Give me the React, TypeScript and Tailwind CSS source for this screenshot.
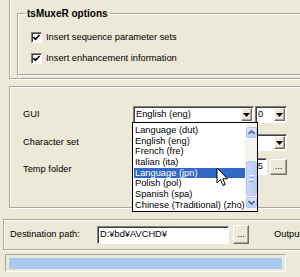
import React from "react";

const FONT = { fontFamily: '"Liberation Sans", Arial, sans-serif' };

const languages = [
  "Language (dut)",
  "English (eng)",
  "French (fre)",
  "Italian (ita)",
  "Language (jpn)",
  "Polish (pol)",
  "Spanish (spa)",
  "Chinese (Traditional) (zho)",
];

function Checkbox() {
  return (
    <div className="w-[11px] h-[11px] bg-white border border-t-[#808080] border-l-[#808080] border-r-white border-b-white shadow-[inset_1px_1px_0_#404040] flex items-center justify-center">
      <svg width="9" height="9" viewBox="0 0 9 9">
        <polyline points="1.5,4.2 3.5,6.3 7.5,2" fill="none" stroke="#000" strokeWidth="1.7" />
      </svg>
    </div>
  );
}

function ArrowButton() {
  return (
    <div className="w-[11px] h-full bg-[#ece9d8] border border-t-white border-l-white border-r-[#716f64] border-b-[#716f64] shadow-[inset_-1px_-1px_0_#aca899] flex items-center justify-center">
      <svg width="7" height="4" viewBox="0 0 7 4">
        <polygon points="0,0 7,0 3.5,4" fill="#000" />
      </svg>
    </div>
  );
}

function Sunken({ className, children }: { className: string; children?: React.ReactNode }) {
  return (
    <div
      className={`bg-white border border-t-[#808080] border-l-[#808080] border-r-white border-b-white shadow-[inset_1px_1px_0_#404040] flex items-center ${className}`}
    >
      {children}
    </div>
  );
}

function Combo({ className, text }: { className: string; text: string }) {
  return (
    <Sunken className={`${className} pl-[2px] pr-[1px] py-[1px]`}>
      <span className="flex-1 leading-none">{text}</span>
      <ArrowButton />
    </Sunken>
  );
}

function DotsButton({ className }: { className: string }) {
  return (
    <div
      className={`bg-[#ece9d8] border border-t-white border-l-white border-r-[#716f64] border-b-[#716f64] shadow-[inset_-1px_-1px_0_#aca899] flex items-center justify-center leading-none ${className}`}
    >
      ...
    </div>
  );
}

function Chevron({ up }: { up: boolean }) {
  return (
    <svg width="7" height="5" viewBox="0 0 7 5">
      <polyline
        points={up ? "0.5,4 3.5,1 6.5,4" : "0.5,1 3.5,4 6.5,1"}
        fill="none"
        stroke="#4d6185"
        strokeWidth="1.6"
      />
    </svg>
  );
}

function ScrollBtn({ up }: { up: boolean }) {
  return (
    <div className="h-[11px] w-full rounded-[2px] border border-[#b5c8f2] bg-gradient-to-b from-[#dbe5fd] to-[#bccdf7] flex items-center justify-center">
      <Chevron up={up} />
    </div>
  );
}

function DropList() {
  return (
    <div className="absolute left-[132px] top-[122px] w-[126px] h-[90px] bg-white border border-black flex">
      <div className="flex-1 pt-[2px] pl-[1px]">
        {languages.map((lang) => (
          <div
            key={lang}
            className={`h-[10.7px] pl-[1px] leading-[10.7px] whitespace-nowrap ${
              lang === "Language (jpn)" ? "bg-[#316ac5] text-white" : "text-black"
            }`}
          >
            {lang}
          </div>
        ))}
      </div>
      <div className="w-[12px] bg-[#f4f3ee] flex flex-col pt-[4px] pb-[3px] px-[0.5px]">
        <ScrollBtn up />
        <div className="flex-1 flex flex-col justify-end pb-[1px]">
          <div className="h-[35px] rounded-[2px] border border-[#b5c8f2] bg-gradient-to-r from-[#cad8fc] to-[#b9cbf6] flex flex-col items-center justify-center gap-[1px]">
            <div className="w-[5px] h-px bg-[#eef3ff]" />
            <div className="w-[5px] h-px bg-[#8ca5e0]" />
            <div className="w-[5px] h-px bg-[#eef3ff]" />
            <div className="w-[5px] h-px bg-[#8ca5e0]" />
          </div>
        </div>
        <ScrollBtn up={false} />
      </div>
    </div>
  );
}

function Cursor() {
  return (
    <svg className="absolute left-[216px] top-[167px]" width="13" height="21" viewBox="0 0 13 21">
      <path
        d="M1 1 L1 16 L4.5 12.5 L7 18.5 L9.3 17.5 L6.8 11.8 L11.5 11.8 Z"
        fill="#fff"
        stroke="#000"
        strokeWidth="1"
        strokeLinejoin="miter"
      />
    </svg>
  );
}

const etched = "border border-[#aca899] shadow-[inset_1px_1px_0_#fff,1px_1px_0_#fff]";

export default function App() {
  return (
    <div
      className="relative w-[300px] h-[277px] overflow-hidden bg-[#ece9d8] text-[9.3px] text-black"
      style={FONT}
    >
      {/* top panel with tsMuxeR options group */}
      <div className={`ml-[9px] -mt-[20px] w-[330px] h-[99px] ${etched} pl-[7px] pt-[32px]`}>
        <div className={`relative w-[320px] h-[62px] ${etched} pl-[13px] pt-[18px] flex flex-col gap-[10px]`}>
          <div className="absolute left-[7px] -top-[6px] px-[2px] bg-[#ece9d8] text-[10px] font-bold leading-[12px]">
            tsMuxeR options
          </div>
          <div className="flex items-center gap-[4px] h-[11px]">
            <Checkbox />
            <span>Insert sequence parameter sets</span>
          </div>
          <div className="flex items-center gap-[4px] h-[11px]">
            <Checkbox />
            <span>Insert enhancement information</span>
          </div>
        </div>
      </div>

      {/* GUI settings panel */}
      <div className={`ml-[9px] mt-[7px] w-[330px] h-[122px] ${etched} pl-[13px] pt-[19px]`}>
        <div className="flex items-center h-[17px]">
          <span className="w-[110px] pt-[1px]">GUI</span>
          <Combo className="w-[121px] h-[17px]" text="English (eng)" />
          <Combo className="ml-[1px] w-[32px] h-[17px]" text="0" />
        </div>
        <div className="flex items-center h-[17px] mt-[11px]">
          <span className="w-[110px]">Character set</span>
          <Combo className="w-[154px] h-[17px]" text="" />
        </div>
        <div className="flex items-center h-[17px] mt-[7px]">
          <span className="w-[110px] pt-[6px]">Temp folder</span>
          <Sunken className="w-[134px] h-[17px] justify-end pr-[3px]">
            <span className="leading-none">5</span>
          </Sunken>
          <DotsButton className="ml-[3px] w-[17px] h-[16px]" />
        </div>
      </div>

      {/* destination panel */}
      <div className={`ml-[3px] mt-[11px] w-[330px] h-[31px] ${etched} pl-[6px] flex items-center`}>
        <span className="w-[87px]">Destination path:</span>
        <Sunken className="w-[132px] h-[18px] pl-[2px]">
          <span className="leading-none">D:¥bd¥AVCHD¥</span>
        </Sunken>
        <DotsButton className="ml-[4px] w-[16px] h-[19px]" />
        <span className="ml-[25px]">Output</span>
      </div>

      {/* progress bar */}
      <div className="ml-[5px] mt-[4px] w-[281px] h-[18px] border border-t-[#aca899] border-l-[#aca899] border-r-white border-b-white p-[3px]">
        <div className="w-full h-[11px] bg-[#a9c9ef]" />
      </div>

      <DropList />
      <Cursor />
    </div>
  );
}
